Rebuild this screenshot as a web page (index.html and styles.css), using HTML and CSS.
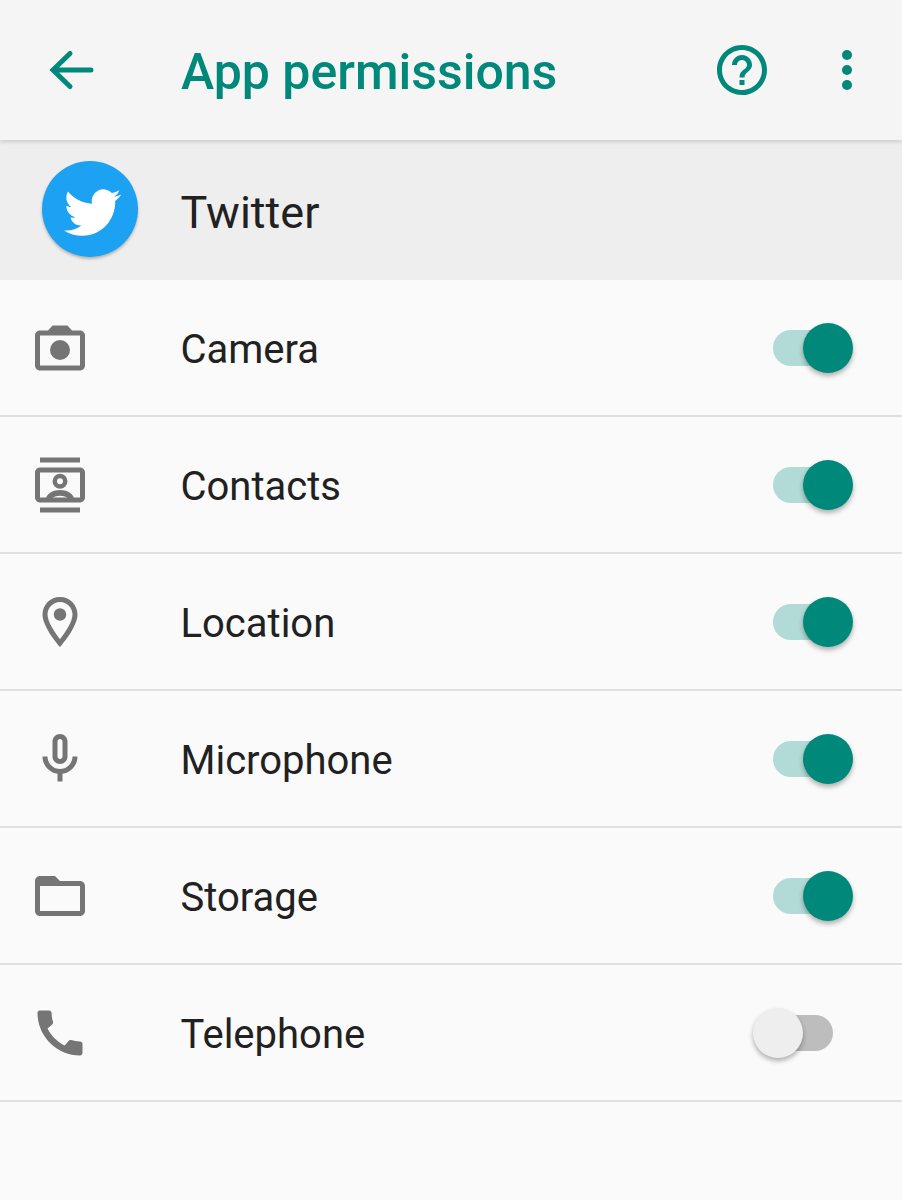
FILE: index.html
```html
<!DOCTYPE html>
<html>
<head>
    <title>App permissions</title>
    <link rel="stylesheet" href="styles.css">
</head>
<body>
    <header class="toolbar">
        <svg class="back-icon" viewBox="0 0 24 24"><path d="M19.6 12H4.6M11.2 5.4L4.4 12l6.8 6.6" fill="none" stroke="currentColor" stroke-width="2" stroke-linecap="round"/></svg>
        <h1 class="toolbar-title">App permissions</h1>
        <svg class="help-icon" viewBox="0 0 24 24"><path d="M11 18h2v-2h-2v2zm1-16C6.48 2 2 6.48 2 12s4.48 10 10 10 10-4.48 10-10S17.52 2 12 2zm0 18c-4.41 0-8-3.59-8-8s3.59-8 8-8 8 3.59 8 8-3.59 8-8 8zm0-14c-2.21 0-4 1.79-4 4h2c0-1.1.9-2 2-2s2 .9 2 2c0 2-3 1.75-3 5h2c0-2.25 3-2.5 3-5 0-2.21-1.79-4-4-4z"/></svg>
        <svg class="more-icon" viewBox="0 0 24 24"><circle cx="12" cy="6" r="2"/><circle cx="12" cy="12" r="2"/><circle cx="12" cy="18" r="2"/></svg>
    </header>

    <div class="app-row">
        <div class="app-logo">
            <svg viewBox="0 0 24 24"><path d="M23.953 4.57a10 10 0 01-2.825.775 4.958 4.958 0 002.163-2.723c-.951.555-2.005.959-3.127 1.184a4.92 4.92 0 00-8.384 4.482C7.69 8.095 4.067 6.13 1.64 3.162a4.822 4.822 0 00-.666 2.475c0 1.71.87 3.213 2.188 4.096a4.904 4.904 0 01-2.228-.616v.06a4.923 4.923 0 003.946 4.827 4.996 4.996 0 01-2.212.085 4.936 4.936 0 004.604 3.417 9.867 9.867 0 01-6.102 2.105c-.39 0-.779-.023-1.17-.067a13.995 13.995 0 007.557 2.209c9.053 0 13.998-7.496 13.998-13.985 0-.21 0-.42-.015-.63A9.935 9.935 0 0024 4.59z"/></svg>
        </div>
        <span class="app-name">Twitter</span>
    </div>

    <ul class="perm-list">
        <li class="perm-row">
            <svg class="perm-icon" viewBox="0 0 24 24"><path d="M20 5h-3.2L15 3H9L7.2 5H4c-1.1 0-2 .9-2 2v12c0 1.1.9 2 2 2h16c1.1 0 2-.9 2-2V7c0-1.1-.9-2-2-2zm0 14H4V7h16v12z"/><circle cx="12" cy="12.8" r="4"/></svg>
            <span class="perm-name">Camera</span>
            <span class="switch on"><span class="thumb"></span></span>
        </li>
        <li class="perm-row">
            <svg class="perm-icon" viewBox="0 0 24 24"><path d="M4 1h16v2H4zM4 21h16v2H4z"/><path d="M20 5H4c-1.1 0-2 .9-2 2v10c0 1.1.9 2 2 2h16c1.1 0 2-.9 2-2V7c0-1.1-.9-2-2-2zm0 12H4V7h16v10z"/><path fill-rule="evenodd" d="M12 7.5a3 3 0 100 6 3 3 0 000-6zm0 1.8a1.2 1.2 0 110 2.4 1.2 1.2 0 010-2.4z"/><path d="M6.3 17.5c.6-2.300 3-3.500 5.700-3.500s5.100 1.200 5.700 3.500h-2.300c-.8-.8-2-1.200-3.400-1.200s-2.600.4-3.400 1.200z"/></svg>
            <span class="perm-name">Contacts</span>
            <span class="switch on"><span class="thumb"></span></span>
        </li>
        <li class="perm-row">
            <svg class="perm-icon" viewBox="0 0 24 24"><path d="M12 2C8.130 2 5 5.130 5 9c0 5.250 7 13 7 13s7-7.750 7-13c0-3.870-3.130-7-7-7zM7 9c0-2.760 2.240-5 5-5s5 2.240 5 5c0 2.880-2.880 7.190-5 9.880C9.920 16.210 7 11.850 7 9z"/><circle cx="12" cy="9" r="2.500"/></svg>
            <span class="perm-name">Location</span>
            <span class="switch on"><span class="thumb"></span></span>
        </li>
        <li class="perm-row">
            <svg class="perm-icon" viewBox="0 0 24 24"><path d="M12 14c1.660 0 3-1.340 3-3V5c0-1.660-1.340-3-3-3S9 3.340 9 5v6c0 1.660 1.340 3 3 3zm-1-9c0-.55.45-1 1-1s1 .45 1 1v6c0 .55-.45 1-1 1s-1-.45-1-1V5z"/><path d="M17 11c0 2.760-2.240 5-5 5s-5-2.240-5-5H5c0 3.530 2.610 6.430 6 6.920V21h2v-3.080c3.390-.49 6-3.390 6-6.920h-2z"/></svg>
            <span class="perm-name">Microphone</span>
            <span class="switch on"><span class="thumb"></span></span>
        </li>
        <li class="perm-row">
            <svg class="perm-icon" viewBox="0 0 24 24"><path d="M20 6h-8l-2-2H4c-1.100 0-2 .9-2 2v12c0 1.100.9 2 2 2h16c1.100 0 2-.9 2-2V8c0-1.100-.9-2-2-2zm0 12H4V8h16v10z"/></svg>
            <span class="perm-name">Storage</span>
            <span class="switch on"><span class="thumb"></span></span>
        </li>
        <li class="perm-row">
            <svg class="perm-icon" viewBox="0 0 24 24"><path d="M20.010 15.380c-1.230 0-2.420-.2-3.530-.56-.35-.12-.74-.03-1.010.24l-1.570 1.970c-2.830-1.350-5.480-3.900-6.890-6.830l1.950-1.660c.27-.28.35-.67.24-1.020-.37-1.110-.56-2.300-.56-3.530 0-.54-.45-.99-.99-.99H4.190C3.650 3 3 3.240 3 3.990 3 13.280 10.730 21 20.010 21c.71 0 .99-.63.99-1.180v-3.450c0-.54-.45-.99-.99-.99z"/></svg>
            <span class="perm-name">Telephone</span>
            <span class="switch"><span class="thumb"></span></span>
        </li>
    </ul>
</body>
</html>
```

FILE: styles.css
```css
body {
    margin: 0;
    height: 1200px;
    overflow: hidden;
    background-color: #fafafa;
    font-family: Roboto, "Liberation Sans", sans-serif;
    color: #212121;
}

.toolbar {
    position: relative;
    display: flex;
    align-items: center;
    height: 140px;
    box-sizing: border-box;
    padding-left: 42px;
    background-color: #f5f5f5;
    color: #00897b;
    box-shadow: 0 2px 4px rgba(0, 0, 0, 0.14);
}

.toolbar svg {
    width: 60px;
    height: 60px;
    fill: currentColor;
    flex: none;
}

.toolbar-title {
    flex: 1;
    margin: 4px 0 0 79px;
    font-size: 50px;
    font-weight: 500;
}

.more-icon {
    margin: 0 25px 0 45px;
}

.app-row {
    display: flex;
    align-items: center;
    height: 140px;
    padding-left: 42px;
    background-color: #eeeeee;
}

.app-logo {
    display: flex;
    align-items: center;
    justify-content: center;
    width: 96px;
    height: 96px;
    margin-top: -2px;
    border-radius: 50%;
    background-color: #1da1f2;
    box-shadow: 0 2px 3px rgba(0, 0, 0, 0.25);
}

.app-logo svg {
    width: 57px;
    height: 57px;
    margin: 6px 0 0 5px;
    fill: #fff;
}

.app-name {
    margin: 4px 0 0 42.5px;
    font-size: 45px;
}

.perm-list {
    margin: 0;
    padding: 0;
    list-style: none;
}

.perm-row {
    display: flex;
    align-items: center;
    height: 137px;
    box-sizing: border-box;
    padding: 0 49px 0 30px;
    border-bottom: 2px solid #e0e0e0;
}

.perm-icon {
    width: 60px;
    height: 60px;
    fill: #757575;
    flex: none;
}

.perm-name {
    flex: 1;
    margin: 4px 0 0 90.5px;
    font-size: 40px;
}

.switch {
    position: relative;
    width: 60px;
    height: 36px;
    margin-right: 20px;
    border-radius: 18px;
    background-color: #bdbdbd;
}

.switch.on {
    background-color: #b2dad6;
}

.thumb {
    position: absolute;
    top: -7px;
    left: -20px;
    width: 50px;
    height: 50px;
    border-radius: 50%;
    background-color: #eeeeee;
    box-shadow: 0 3px 5px rgba(0, 0, 0, 0.3);
}

.switch.on .thumb {
    left: 30px;
    background-color: #00897b;
}
```
